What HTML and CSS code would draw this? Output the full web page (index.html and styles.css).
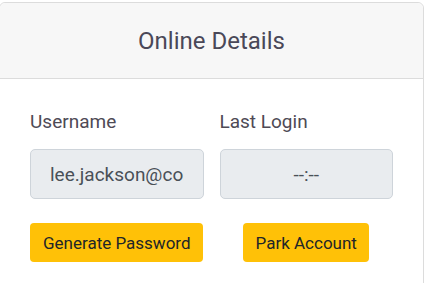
FILE: index.html
```html
<!DOCTYPE html>
<html lang="en">
<head>
  <meta charset="UTF-8" />
  <meta name="viewport" content="width=device-width, initial-scale=1.0" />
  <title>Online Details</title>
  <link rel="stylesheet" href="styles.css">
</head>
<body>
  <div class="card">
    <div class="card-header">
      <h2>Online Details</h2>
    </div>
    <div class="card-body">
      <div class="field">
        <label>Username</label>
        <input type="text" class="form-control" value="lee.jackson@company.com" readonly />
      </div>
      <div class="field">
        <label>Last Login</label>
        <input type="text" class="form-control center" value="--:--" readonly />
      </div>
      <div class="action">
        <button class="btn">Generate Password</button>
      </div>
      <div class="action">
        <button class="btn">Park Account</button>
      </div>
    </div>
  </div>
</body>
</html>
```

FILE: styles.css
```css
* {
  margin: 0;
  padding: 0;
  box-sizing: border-box;
}

html, body {
  height: 283px;
  overflow: hidden;
}

body {
  font-family: Roboto, 'Liberation Sans', sans-serif;
  background: #fff;
  padding-top: 2px;
}

.card {
  margin-left: -1px;
  width: 425px;
  height: 300px;
  border: 1px solid #dcdcdc;
  border-radius: 6px;
  background: white;
}

.card-header {
  height: 76px;
  background: #f7f7f7;
  border-bottom: 1px solid #dcdcdc;
  border-radius: 6px 6px 0 0;
  display: flex;
  align-items: center;
  justify-content: center;
}

.card-header h2 {
  font-size: 24px;
  font-weight: 400;
  color: #4a4858;
}

.card-body {
  display: grid;
  grid-template-columns: 1fr 1fr;
  column-gap: 16px;
  row-gap: 24px;
  padding: 29px 30px 0 30px;
}

.field label {
  display: block;
  font-size: 19px;
  line-height: 27px;
  color: #4e4a55;
  margin-bottom: 14px;
}

.form-control {
  display: block;
  width: 100%;
  height: 50px;
  padding: 0 19px;
  font-family: inherit;
  font-size: 19px;
  color: #495057;
  background: #e9ecef;
  border: 1px solid #ced4da;
  border-radius: 5px;
  outline: none;
}

.form-control.center {
  text-align: center;
}

.action {
  display: flex;
  justify-content: center;
}

.btn {
  padding: 7.5px 12.5px;
  font-family: inherit;
  font-size: 17px;
  line-height: 24px;
  color: #212529;
  background: #ffc107;
  border: none;
  border-radius: 4px;
  cursor: pointer;
}
```
